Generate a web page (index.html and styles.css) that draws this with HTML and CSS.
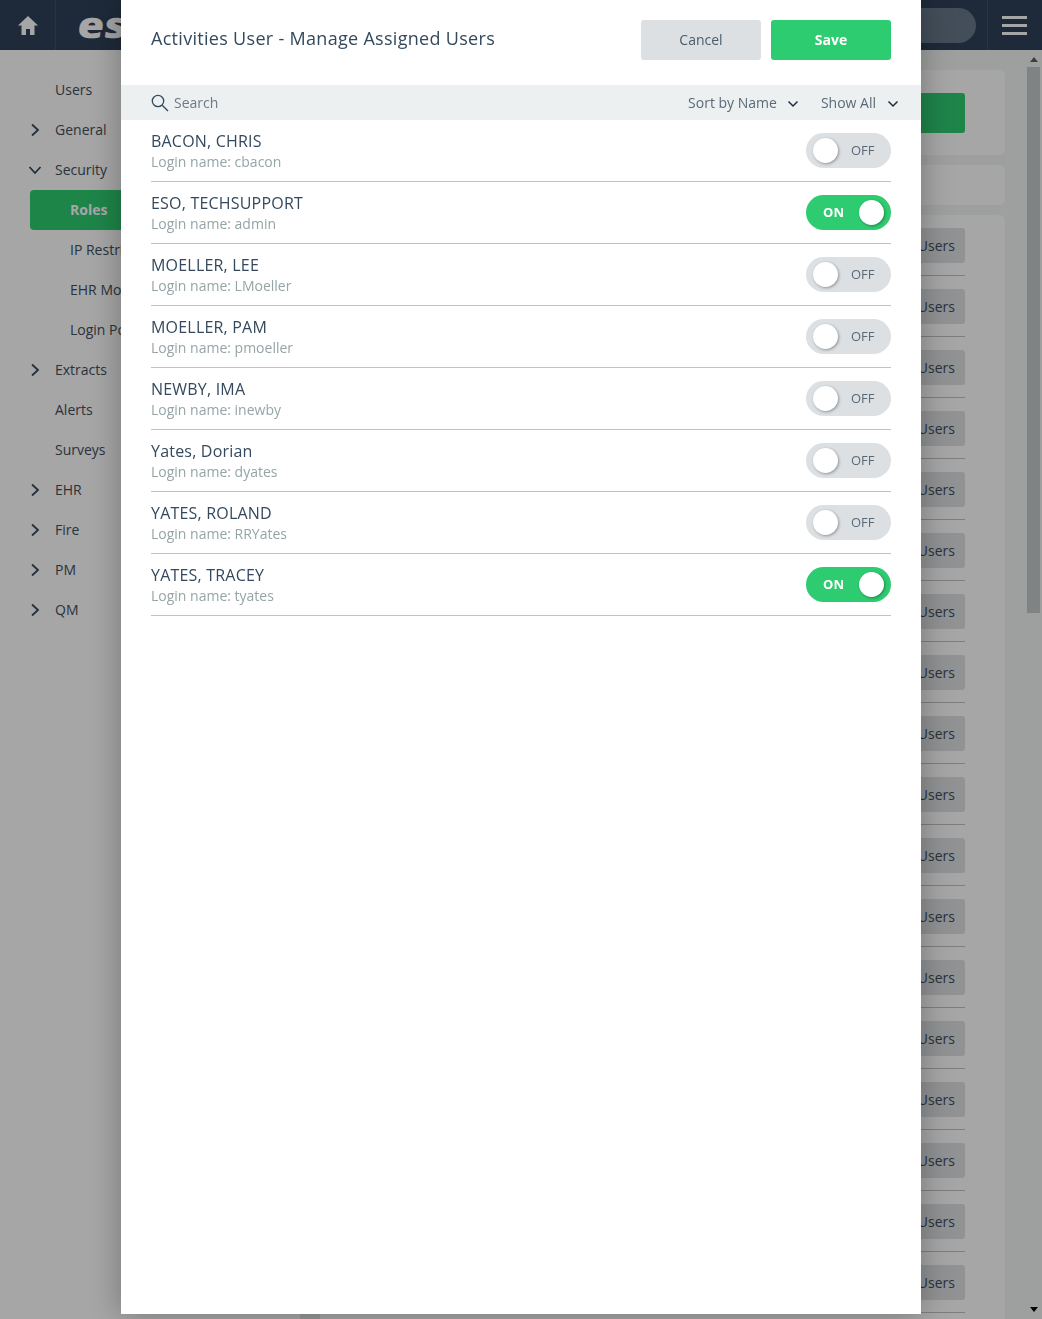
FILE: index.html
```html
<!DOCTYPE html>
<html lang="en">
<head>
  <meta charset="UTF-8" />
  <meta name="viewport" content="width=device-width, initial-scale=1.0"/>
  <title>Activities User - Manage Assigned Users</title>
  <link rel="stylesheet" href="styles.css">
</head>
<body>

<div class="app">
  <header class="topbar">
    <div class="home">
      <svg width="20" height="19" viewBox="0 0 20 19"><path d="M10 0 0 9.500h3.500V19H8v-6h4v6h4.500V9.500H20z" fill="#fff"/></svg>
    </div>
    <div class="brand">eso</div>
    <div class="top-search"></div>
    <div class="burger"><span></span><span></span><span></span></div>
  </header>

  <div class="main">
    <nav class="sidebar">
      <div class="nav-item"><span class="nav-icon"></span>Users</div>
      <div class="nav-item"><span class="nav-icon"><svg width="10" height="14" viewBox="0 0 10 14"><path d="M2 1.500 8 7l-6 5.500" class="chev"/></svg></span>General</div>
      <div class="nav-item"><span class="nav-icon"><svg width="14" height="10" viewBox="0 0 14 10"><path d="M1.500 2 7 8l5.500-6" class="chev"/></svg></span>Security</div>
      <div class="nav-sub active">Roles</div>
      <div class="nav-sub">IP Restrictions</div>
      <div class="nav-sub">EHR Modules</div>
      <div class="nav-sub">Login Policy</div>
      <div class="nav-item"><span class="nav-icon"><svg width="10" height="14" viewBox="0 0 10 14"><path d="M2 1.500 8 7l-6 5.500" class="chev"/></svg></span>Extracts</div>
      <div class="nav-item"><span class="nav-icon"></span>Alerts</div>
      <div class="nav-item"><span class="nav-icon"></span>Surveys</div>
      <div class="nav-item"><span class="nav-icon"><svg width="10" height="14" viewBox="0 0 10 14"><path d="M2 1.500 8 7l-6 5.500" class="chev"/></svg></span>EHR</div>
      <div class="nav-item"><span class="nav-icon"><svg width="10" height="14" viewBox="0 0 10 14"><path d="M2 1.500 8 7l-6 5.500" class="chev"/></svg></span>Fire</div>
      <div class="nav-item"><span class="nav-icon"><svg width="10" height="14" viewBox="0 0 10 14"><path d="M2 1.500 8 7l-6 5.500" class="chev"/></svg></span>PM</div>
      <div class="nav-item"><span class="nav-icon"><svg width="10" height="14" viewBox="0 0 10 14"><path d="M2 1.500 8 7l-6 5.500" class="chev"/></svg></span>QM</div>
    </nav>
    <div class="gutter"></div>

    <section class="content">
      <div class="card card-add"><div class="add-btn"></div></div>
      <div class="card card-filter"></div>
      <div class="card card-roles" id="roleRows"></div>
    </section>

    <div class="scrollbar">
      <div class="arrow-up"></div>
      <div class="thumb"></div>
      <div class="track"></div>
      <div class="arrow-down"></div>
    </div>
  </div>
</div>

<div class="overlay"></div>

<div class="modal">
  <div class="modal-head">
    <h2>Activities User - Manage Assigned Users</h2>
    <div class="modal-actions">
      <button class="btn btn-cancel">Cancel</button>
      <button class="btn btn-save">Save</button>
    </div>
  </div>

  <div class="toolbar">
    <div class="search">
      <svg width="18" height="18" viewBox="0 0 18 18"><circle cx="7" cy="7" r="5.700" class="glass"/><path d="m11.200 11.200 5.800 5.800" class="glass"/></svg>
      <span>Search</span>
    </div>
    <div class="drop">Sort by Name <svg width="12" height="8" viewBox="0 0 12 8"><path d="M1.500 1.500 6 6l4.500-4.500" class="drop-chev"/></svg></div>
    <div class="drop drop-last">Show All <svg width="12" height="8" viewBox="0 0 12 8"><path d="M1.500 1.500 6 6l4.500-4.500" class="drop-chev"/></svg></div>
  </div>

  <div class="user-list" id="userList"></div>
</div>

<script>
  const users = [
    ["BACON, CHRIS", "cbacon", false],
    ["ESO, TECHSUPPORT", "admin", true],
    ["MOELLER, LEE", "LMoeller", false],
    ["MOELLER, PAM", "pmoeller", false],
    ["NEWBY, IMA", "inewby", false],
    ["Yates, Dorian", "dyates", false],
    ["YATES, ROLAND", "RRYates", false],
    ["YATES, TRACEY", "tyates", true]
  ];

  let html = "";
  users.forEach(function (u) {
    html += '<div class="user-row"><div class="user-info">' +
      '<div class="user-name">' + u[0] + '</div>' +
      '<div class="user-login">Login name: ' + u[1] + '</div></div>' +
      '<div class="toggle ' + (u[2] ? "on" : "off") + '">' +
      '<span class="knob"></span><span class="toggle-text">' + (u[2] ? "ON" : "OFF") + '</span></div></div>';
  });
  document.getElementById("userList").innerHTML = html;

  let rows = "";
  for (let i = 0; i < 18; i++) {
    rows += '<div class="role-row"><div class="role-btn">Users</div></div>';
  }
  document.getElementById("roleRows").innerHTML = rows;
</script>

</body>
</html>
```

FILE: styles.css
```css
* { box-sizing: border-box; }

html, body {
  height: 100%;
  overflow: hidden;
}

body {
  margin: 0;
  font-family: "Open Sans", Arial, sans-serif;
  color: #34495e;
  background: #fff;
}

.app {
  height: 100vh;
  display: flex;
  flex-direction: column;
}

.topbar {
  height: 50px;
  flex: none;
  display: flex;
  align-items: center;
  background: #2e4158;
}

.home {
  width: 56px;
  height: 50px;
  display: flex;
  align-items: center;
  justify-content: center;
  border-right: 1px solid #3d5068;
}

.home svg { margin-top: 1px; }

.brand {
  margin-left: 22px;
  font-size: 36px;
  font-weight: 800;
  line-height: 50px;
  color: #fff;
  transform-origin: left center;
  transform: scaleX(1.2) skewX(-6deg);
}

.top-search {
  margin-left: auto;
  width: 300px;
  height: 35px;
  margin-right: 11px;
  border-radius: 18px;
  background: #68788a;
}

.burger {
  width: 55px;
  height: 50px;
  padding-right: 2px;
  display: flex;
  flex-direction: column;
  align-items: center;
  justify-content: center;
  gap: 5px;
  border-left: 1px solid #3d5068;
}

.burger span {
  width: 25px;
  height: 3px;
  background: #fff;
}

.main {
  flex: 1;
  min-height: 0;
  display: flex;
  overflow: hidden;
  background: #f3f6f6;
}

.sidebar {
  width: 300px;
  flex: none;
  padding: 20px 0 0 30px;
  background: #fff;
  font-size: 14px;
}

.nav-item, .nav-sub {
  height: 40px;
  display: flex;
  align-items: center;
  padding-bottom: 2px;
  color: #3f4f5c;
}

.nav-icon {
  width: 25px;
  display: flex;
  justify-content: center;
  margin-left: -8px;
  margin-right: 8px;
  padding-top: 2px;
}

.chev {
  fill: none;
  stroke: #34495e;
  stroke-width: 1.800;
}

.nav-sub { padding-left: 40px; }

.nav-sub.active {
  font-weight: 700;
  color: #fff;
  background: #2ecc71;
  border-radius: 4px;
}

.gutter {
  width: 20px;
  flex: none;
  background: #e8ecec;
}

.content {
  flex: 1;
  min-width: 0;
  padding: 20px 20px 0 0;
}

.card {
  margin-bottom: 10px;
  background: #fff;
  border-radius: 6px;
}

.card-add {
  height: 85px;
  padding: 23px 40px 0 0;
}

.add-btn {
  height: 40px;
  background: #2ecc71;
  border-radius: 3px;
}

.card-filter { height: 40px; }

.card-roles { padding: 13px 40px 0 0; }

.role-row {
  height: 61px;
  padding-bottom: 13px;
}

.role-row::after {
  content: "";
  display: block;
  height: 1px;
  margin-top: 12px;
  background: #bdc3c7;
}

.role-btn {
  height: 35px;
  padding-right: 10px;
  display: flex;
  align-items: center;
  justify-content: flex-end;
  font-size: 14px;
  color: #3f4f5c;
  background: #dde0e3;
  border-radius: 3px;
}

.scrollbar {
  width: 17px;
  flex: none;
  padding: 0 2px;
  display: flex;
  flex-direction: column;
  align-items: center;
}

.arrow-up, .arrow-down {
  width: 0;
  height: 0;
  border-left: 4px solid transparent;
  border-right: 4px solid transparent;
}

.arrow-up {
  margin: 7px 0 5px;
  border-bottom: 5px solid #606060;
}

.arrow-down {
  margin: 5px 0 7px;
  border-top: 5px solid #000;
}

.thumb {
  width: 13px;
  height: 546px;
  flex: none;
  background: #c4c9c9;
}

.track { flex: 1; }

.overlay {
  position: fixed;
  inset: 0;
  background: rgba(0, 0, 0, 0.35);
}

.modal {
  position: absolute;
  top: 0;
  left: 121px;
  width: 800px;
  height: 1314px;
  background: #fff;
  box-shadow: 0 0 30px rgba(0, 0, 0, 0.3);
}

.modal-head {
  height: 85px;
  padding: 20px 30px 0;
  display: flex;
  justify-content: space-between;
}

.modal-head h2 {
  margin: 6px 0 0;
  font-size: 18px;
  font-weight: 400;
  line-height: 25px;
  letter-spacing: 0.3px;
  color: #34495e;
}

.modal-actions {
  display: flex;
  gap: 10px;
}

.btn {
  width: 120px;
  height: 40px;
  padding: 0 0 2px;
  border: none;
  border-radius: 3px;
  font-family: inherit;
  font-size: 14px;
  cursor: pointer;
}

.btn-cancel {
  background: #dde0e3;
  color: #4b5c6b;
}

.btn-save {
  background: #2ecc71;
  color: #fff;
  font-weight: 700;
}

.toolbar {
  height: 35px;
  padding: 0 22px 0 30px;
  display: flex;
  align-items: center;
  background: #ecf0f1;
  font-size: 14px;
  color: #5a6a78;
}

.search {
  display: flex;
  align-items: center;
  gap: 5px;
  margin-right: auto;
  color: #6c7a86;
}

.glass {
  fill: none;
  stroke: #34495e;
  stroke-width: 1.300;
}

.drop {
  display: flex;
  align-items: center;
  gap: 10px;
  margin-left: 22px;
}

.drop-last { gap: 11px; }

.drop svg { margin-top: 2px; }

.drop-chev {
  fill: none;
  stroke: #1f2d3a;
  stroke-width: 1.500;
}

.user-list { padding: 0 30px; }

.user-row {
  height: 62px;
  display: flex;
  align-items: center;
  justify-content: space-between;
  border-bottom: 1px solid #bdc3c7;
}

.user-name {
  font-size: 16px;
  line-height: 22px;
  letter-spacing: 0.2px;
  color: #34495e;
}

.user-login {
  font-size: 14px;
  line-height: 20px;
  color: #95a5a6;
}

.user-info { margin-top: 1px; }

.toggle {
  width: 85px;
  height: 35px;
  flex: none;
  display: flex;
  align-items: center;
  border-radius: 18px;
}

.toggle.off {
  padding-left: 7px;
  background: #dde0e3;
}

.toggle.on {
  flex-direction: row-reverse;
  padding-right: 7px;
  background: #2ecc71;
}

.knob {
  width: 25px;
  height: 25px;
  border-radius: 50%;
  background: #fff;
  box-shadow: 1px 1px 3px rgba(0, 0, 0, 0.35);
}

.toggle-text {
  padding-bottom: 2px;
  font-size: 13px;
}

.toggle.off .toggle-text {
  margin-left: 13px;
  color: #5a6a78;
}

.toggle.on .toggle-text {
  margin-right: 15px;
  font-weight: 700;
  color: #fff;
}
```
